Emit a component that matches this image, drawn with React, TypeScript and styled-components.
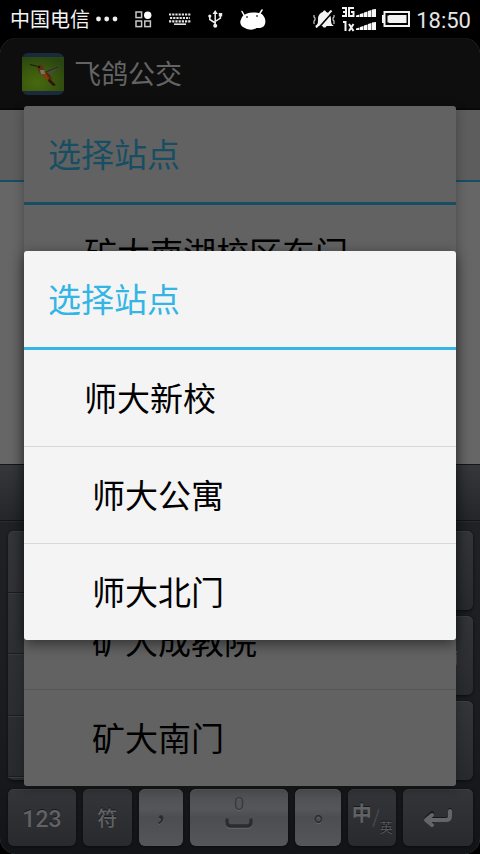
import React from "react";
import styled, { createGlobalStyle, css } from "styled-components";

const GlobalStyle = createGlobalStyle`
  * { box-sizing: border-box; }
  body {
    margin: 0;
    background: #000;
    font-family: "Noto Sans CJK SC", sans-serif;
  }
  h1, h2, ul { margin: 0; padding: 0; }
  ul { list-style: none; }
  button { border: 0; padding: 0; background: none; font: inherit; color: inherit; }
  svg { display: block; flex: none; }
`;

const Phone = styled.div`
  display: flex;
  flex-direction: column;
  min-height: 100vh;
  background: #000;
`;

const StatusBar = styled.header`
  display: flex;
  align-items: center;
  justify-content: space-between;
  height: 38px;
  padding: 0 9px 0 10px;
  color: #f4f4f4;
`;

const StatusGroup = styled.div<{ $gap: number }>`
  display: flex;
  align-items: center;
  gap: ${(p) => p.$gap}px;
`;

const Carrier = styled.span`
  display: flex;
  align-items: center;
  gap: 6px;
  font-size: 20px;
  line-height: 36px;
`;

const Clock = styled.time`
  font-family: Roboto, sans-serif;
  font-size: 22px;
  line-height: 38px;
  padding-top: 4px;
  color: #e6e6e6;
`;

const Screen = styled.div`
  position: relative;
  flex: 1;
  display: flex;
  flex-direction: column;
  border-radius: 16px;
  overflow: hidden;
  background: #666;
`;

const ActionBar = styled.div`
  display: flex;
  align-items: center;
  gap: 10px;
  height: 72px;
  padding: 0 22px;
  background: #0e0e0e;
  border-top: 1px solid #131313;
  border-bottom: 2px solid #080808;
`;

const AppTitle = styled.h1`
  font-size: 27px;
  font-weight: 400;
  line-height: 40px;
  padding-bottom: 2px;
  color: #646464;
`;

const TabStrip = styled.div`
  height: 72px;
  background: #5d5d5d;
  border-bottom: 2px solid #174e63;
`;

const Content = styled.main`
  flex: 1;
`;

const Overlay = styled.div`
  position: absolute;
  inset: 0;
  display: flex;
  align-items: center;
  padding: 0 24px 1px;
`;

const Dialog = styled.section<{ $dimmed?: boolean }>`
  flex: 1;
  border-radius: 3px;
  overflow: hidden;
  background: ${(p) => (p.$dimmed ? "#626262" : "#f4f4f4")};
  color: #000;
  box-shadow: ${(p) =>
    p.$dimmed ? "0 2px 12px rgba(0, 0, 0, 0.3)" : "0 4px 14px rgba(0, 0, 0, 0.5)"};
  --accent: ${(p) => (p.$dimmed ? "#174e63" : "#33b5e5")};
  --divider: ${(p) => (p.$dimmed ? "#565656" : "#d8d8d8")};
`;

const DialogTitle = styled.h2`
  height: 99px;
  padding: 0 24px;
  border-bottom: 3px solid var(--accent);
  color: var(--accent);
  font-size: 33px;
  font-weight: 400;
  line-height: 94px;
`;

const Option = styled.li`
  & + & { border-top: 1px solid var(--divider); }
`;

const OptionButton = styled.button<{ $indent: number }>`
  display: block;
  width: 100%;
  height: 96px;
  padding: 0 24px 2px ${(p) => p.$indent}px;
  font-size: 33px;
  font-weight: 400;
  line-height: 94px;
  text-align: left;
`;

const Keyboard = styled.div`
  background: linear-gradient(#222326, #1a1b1e 70%, #131417);
`;

const Candidates = styled.div`
  height: 57px;
  border-top: 1px solid #151617;
  border-bottom: 1px solid #131416;
  background: linear-gradient(#36373a, #252629);
`;

const KeyArea = styled.div`
  display: flex;
  flex-direction: column;
  gap: 9px;
  padding: 9px 7px 8px 8px;
  border-top: 1px solid #2b2c2f;
`;

const KeyColumns = styled.div`
  display: flex;
  justify-content: space-between;
  height: 249px;
`;

const keyFace = css`
  border-radius: 6px;
  background: linear-gradient(#343539, #282a2e);
  box-shadow: inset 0 1px #3d3e41, 0 1px 3px #0b0c0d;
`;

const PunctuationPanel = styled.div`
  ${keyFace}
  display: flex;
  flex-direction: column;
  width: 68px;
  padding-bottom: 3px;
`;

const PunctuationKey = styled.button`
  flex: 1;
  border-bottom: 1px solid #1c1d1f;
  box-shadow: 0 1px #3a3b3e;
`;

const SideKeys = styled.div`
  display: flex;
  flex-direction: column;
  gap: 6px;
  width: 70px;
`;

const SideKey = styled.button`
  ${keyFace}
  flex: 1;
  color: #5f5f61;
  font-size: 20px;
`;

const KeyRow = styled.div`
  display: flex;
  gap: 7px;
  height: 57px;
`;

const Key = styled.button<{ $grow: number; $light?: boolean }>`
  ${keyFace}
  flex: ${(p) => p.$grow} 1 0;
  display: flex;
  flex-direction: column;
  align-items: center;
  justify-content: center;
  color: #626264;
  font-size: 20px;
  font-weight: 500;
  line-height: 24px;
  text-shadow: 0 -1px #17181a;
  ${(p) =>
    p.$light &&
    css`
      background: linear-gradient(#4e4f52, #55565a 35%, #4c4d51 50%, #55565a);
      box-shadow: inset 0 1px #5c5d60, 0 1px 3px #0b0c0d;
      color: #2a2b2e;
      text-shadow: 0 1px #626366;
    `}
`;

const NumberLabel = styled.span`
  font-family: Roboto, sans-serif;
  font-size: 23px;
  padding-top: 4px;
`;

const Punctuation = styled.span`
  font-family: "Noto Sans CJK TC", sans-serif;
  font-size: 24px;
`;

const ZeroLabel = styled.span`
  font-family: "Liberation Sans", sans-serif;
  font-size: 18px;
  font-weight: 400;
  line-height: 20px;
  color: #38393c;
`;

const SpaceLegend = styled.span`
  display: flex;
  flex-direction: column;
  align-items: center;
  padding-bottom: 12px;
`;

const LanguageLabel = styled.span`
  display: flex;
  align-items: center;
`;

const Chinese = styled.span`
  padding-bottom: 10px;
  font-weight: 700;
`;

const English = styled.span`
  padding-top: 18px;
  font-size: 13px;
  font-weight: 400;
  color: #555658;
`;

const MoreDots = () => (
  <svg width="22" height="6" viewBox="0 0 22 6" fill="#eee">
    <circle cx="2.5" cy="3" r="2.4" />
    <circle cx="10.7" cy="3" r="2.4" />
    <circle cx="19" cy="3" r="2.4" />
  </svg>
);

const AppsIcon = () => (
  <svg width="17" height="17" viewBox="0 0 17 17" fill="none" stroke="#c8c8c8" strokeWidth="1.5">
    <rect x="1" y="1" width="5.6" height="5.6" />
    <rect x="1" y="10" width="5.6" height="5.6" />
    <rect x="9.8" y="10" width="5.6" height="5.6" />
    <circle cx="12.7" cy="4.2" r="3.7" fill="#fff" stroke="none" />
  </svg>
);

const KeyboardIcon = () => (
  <svg width="22" height="12" viewBox="0 0 22 12" stroke="#e4e4e4" fill="none">
    <path d="M0 1.5h22" strokeWidth="2.2" strokeDasharray="2.2 1" />
    <path d="M1 5h20" strokeWidth="2.2" strokeDasharray="2.2 1" />
    <path d="M0 8.400h22" strokeWidth="2.2" strokeDasharray="2.2 1" />
    <path d="M5 11.200h12" strokeWidth="1.6" />
  </svg>
);

const UsbIcon = () => (
  <svg width="15" height="18" viewBox="0 0 15 18" fill="none" stroke="#eee" strokeWidth="1.5">
    <path d="M7.2 3v13M7.2 13L1.8 9.5V6M7.2 11.5l5.2-3.5V5" />
    <path d="M7.2 0L9.8 4H4.6z" fill="#eee" stroke="none" />
    <circle cx="1.8" cy="6" r="1.6" fill="#eee" stroke="none" />
    <path d="M10.8 3h3.4v3.4h-3.4z" fill="#eee" stroke="none" />
    <circle cx="7.2" cy="15.8" r="2" fill="#eee" stroke="none" />
  </svg>
);

const MascotIcon = () => (
  <svg width="27" height="21" viewBox="0 0 27 21">
    <path d="M4.500 7L2 2.500M19.500 5L22 1" stroke="#fff" strokeWidth="1.5" strokeLinecap="round" />
    <path
      d="M2 8c2-3 6-4.500 11-4.500C18 3.500 22 4 23.500 7c2.500 3 2.500 8 0 10.500-2.500 2-5 1.500-7 1.500-3 2.500-8.500 2-11.500 0C0 17.500-.5 12.500 1 10.500z"
      fill="#fff"
    />
    <circle cx="7" cy="8" r="0.900" fill="#333" />
    <circle cx="17" cy="7" r="0.900" fill="#333" />
  </svg>
);

const MutedIcon = () => (
  <svg width="22" height="18" viewBox="0 0 22 18">
    <path
      d="M2 16c3-1.500 3-3 3-7C5 5 7.500 2.500 10 2c0-2 3-2 3 0 2.500.5 5 3 5 7 0 4 .5 5.500 3 7zM9.500 16h4c-.5 2-3.500 2-4 0z"
      fill="#f2f2f2"
    />
    <path d="M20.500 1L5.500 18" stroke="#000" strokeWidth="1.800" />
    <path d="M18.500 0.500L3 17.500" stroke="#f2f2f2" strokeWidth="2" />
    <path
      d="M1 5v2l1 1v2l-1 1v3M21 5v2l-1 1v2l1 1v3"
      stroke="#c8c8c8"
      strokeWidth="1.2"
      fill="none"
    />
  </svg>
);

const SignalBars = ({ y }: { y: number }) => (
  <path
    transform={`translate(15 ${y})`}
    d="M0 8V6.500l3.500-1V8zM4 8V5l3.500-1v4zM8 8V3.500l3.500-1V8zM12 8V2l3.500-1v7zM16 8V0.500L20 0v8z"
    fill="#f8f8f8"
  />
);

const SignalIcon = () => (
  <svg width="35" height="26" viewBox="0 0 35 26">
    <SignalBars y={3} />
    <SignalBars y={16} />
    <g fill="none" stroke="#f2f2f2" strokeWidth="2">
      <path d="M1 2h4v8H1M2 6h3M13 2H8v8h4.500V6H10" />
      <path d="M2 16h2.500v9M8 18l4.500 7M12.500 18L8 25" />
    </g>
  </svg>
);

const BatteryIcon = () => (
  <svg width="28" height="16" viewBox="0 0 28 16">
    <path d="M0 4h3v8H0z" fill="#f2f2f2" />
    <rect x="2.500" y="1" width="24.500" height="14" fill="none" stroke="#f2f2f2" strokeWidth="2" />
    <path d="M7 3h18v10H7V11.500H5.500v-7H7z" fill="#f2f2f2" />
    <path d="M7 3.500h18v9H7" fill="none" stroke="#000" />
  </svg>
);

const BirdIcon = () => (
  <svg width="42" height="42" viewBox="0 0 42 42">
    <defs>
      <radialGradient id="leaf" cx="35%" cy="75%" r="80%">
        <stop offset="0" stopColor="#47690f" />
        <stop offset="0.5" stopColor="#3b590d" />
        <stop offset="1" stopColor="#2b4511" />
      </radialGradient>
    </defs>
    <rect width="42" height="42" rx="6" fill="#182a3b" />
    <path d="M0 4h42v34H0z" fill="url(#leaf)" />
    <path d="M8 11.500l8 2" stroke="#15180d" strokeWidth="1" />
    <path d="M24 20l5-4 8-3-6 6-6 4z" fill="#4b4942" />
    <path d="M24 19l12-5" stroke="#25271f" strokeWidth="1" />
    <path d="M17 18l7 0 5 6 2 6-5-2-6-5z" fill="#7a3d0c" />
    <path d="M23 18l4 3 4 6-5-3z" fill="#4a2810" />
    <path d="M15 14c1-3 5-3 6 0l1 4-4 3-2-4z" fill="#5a3010" />
    <path d="M18 17l4 0 1 4-4 0z" fill="#77756f" />
    <path d="M27 25l7 7-3 1-5-5z" fill="#30170b" />
    <circle cx="17" cy="14" r="1" fill="#0d0b08" />
  </svg>
);

const SpaceIcon = () => (
  <svg width="30" height="16" viewBox="0 -4 30 16" fill="none" strokeLinecap="round">
    <path d="M3 3v2q0 4 4 4h16q4 0 4-4V3" stroke="#616265" strokeWidth="4" />
    <path d="M3 2v2q0 4 4 4h16q4 0 4-4V2" stroke="#2b2c2e" strokeWidth="3.500" />
  </svg>
);

const EnterIcon = () => (
  <svg width="30" height="22" viewBox="0 0 30 22" fill="none" strokeLinecap="round" strokeLinejoin="round">
    <path d="M27 3v5q0 4-4 4H4M9 6l-6 6 6 5" stroke="#17181a" strokeWidth="4" />
    <path d="M27 4v5q0 4-4 4H4M9 8l-6 5 6 5" stroke="#646567" strokeWidth="4" />
  </svg>
);

const SlashIcon = () => (
  <svg width="8" height="20" viewBox="0 0 8 20">
    <path d="M7 1L1 19" stroke="#45464a" strokeWidth="1.500" />
  </svg>
);

type Stop = { name: string; indent: number };

const outerStops: Stop[] = [
  { name: "矿大南湖校区东门", indent: 60 },
  { name: "", indent: 68 },
  { name: "", indent: 68 },
  { name: "", indent: 68 },
  { name: "矿大成教院", indent: 68 },
  { name: "矿大南门", indent: 68 },
];

const innerStops: Stop[] = [
  { name: "师大新校", indent: 60 },
  { name: "师大公寓", indent: 68 },
  { name: "师大北门", indent: 68 },
];

const StopDialog = ({ stops, dimmed }: { stops: Stop[]; dimmed?: boolean }) => (
  <Overlay>
    <Dialog role="dialog" aria-label="选择站点" $dimmed={dimmed}>
      <DialogTitle>选择站点</DialogTitle>
      <ul>
        {stops.map((stop, i) => (
          <Option key={i}>
            <OptionButton type="button" $indent={stop.indent}>
              {stop.name}
            </OptionButton>
          </Option>
        ))}
      </ul>
    </Dialog>
  </Overlay>
);

export default function App() {
  return (
    <Phone>
      <GlobalStyle />
      <StatusBar>
        <StatusGroup $gap={17}>
          <Carrier>
            中国电信
            <MoreDots />
          </Carrier>
          <AppsIcon />
          <KeyboardIcon />
          <UsbIcon />
          <MascotIcon />
        </StatusGroup>
        <StatusGroup $gap={6}>
          <MutedIcon />
          <SignalIcon />
          <BatteryIcon />
          <Clock>18:50</Clock>
        </StatusGroup>
      </StatusBar>
      <Screen>
        <ActionBar>
          <BirdIcon />
          <AppTitle>飞鸽公交</AppTitle>
        </ActionBar>
        <TabStrip />
        <Content />
        <Keyboard>
          <Candidates />
          <KeyArea>
            <KeyColumns>
              <PunctuationPanel>
                {[0, 1, 2, 3].map((n) => (
                  <PunctuationKey key={n} type="button" />
                ))}
              </PunctuationPanel>
              <SideKeys>
                <SideKey type="button" />
                <SideKey type="button">重输</SideKey>
                <SideKey type="button" />
              </SideKeys>
            </KeyColumns>
            <KeyRow>
              <Key type="button" $grow={68}>
                <NumberLabel>123</NumberLabel>
              </Key>
              <Key type="button" $grow={49}>符</Key>
              <Key type="button" $grow={44} $light>
                <Punctuation>，</Punctuation>
              </Key>
              <Key type="button" $grow={99} $light>
                <SpaceLegend>
                  <ZeroLabel>0</ZeroLabel>
                  <SpaceIcon />
                </SpaceLegend>
              </Key>
              <Key type="button" $grow={46} $light>
                <Punctuation>。</Punctuation>
              </Key>
              <Key type="button" $grow={48}>
                <LanguageLabel>
                  <Chinese>中</Chinese>
                  <SlashIcon />
                  <English>英</English>
                </LanguageLabel>
              </Key>
              <Key type="button" $grow={70} aria-label="换行">
                <EnterIcon />
              </Key>
            </KeyRow>
          </KeyArea>
        </Keyboard>
        <StopDialog stops={outerStops} dimmed />
        <StopDialog stops={innerStops} />
      </Screen>
    </Phone>
  );
}
